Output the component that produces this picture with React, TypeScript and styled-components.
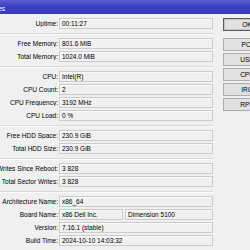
import React from "react";
import styled, { createGlobalStyle } from "styled-components";

const GlobalStyle = createGlobalStyle`
  html, body {
    margin: 0;
    padding: 0;
    background: #f0f0f0;
    overflow: hidden;
  }
  body {
    font-family: "Liberation Sans", Arial, sans-serif;
    color: #000;
  }
`;

const Window = styled.div`
  width: 310px;
  margin-left: -30px;
  background: #f0f0f0;
`;

const TitleBar = styled.div`
  height: 14px;
  display: flex;
  align-items: center;
  padding-left: 4px;
  padding-top: 2px;
  box-sizing: border-box;
  background: linear-gradient(#5a5ecf, #3b40c3 45%, #373cc0);
  color: #fff;
  font-size: 6.5px;
`;

const Body = styled.div`
  display: flex;
  align-items: flex-start;
  padding-top: 3px;
`;

const Form = styled.div`
  width: 243px;
  display: flex;
  flex-direction: column;
`;

const Row = styled.div`
  display: grid;
  grid-template-columns: 89px 1fr;
  height: 13px;
  align-items: center;
`;

const Label = styled.div`
  text-align: right;
  padding-right: 1px;
  font-size: 6.5px;
  white-space: nowrap;
  overflow: hidden;
  direction: rtl;
`;

const Fields = styled.div`
  display: flex;
  gap: 2px;
`;

const Field = styled.div<{ $width?: number }>`
  ${(p) => (p.$width ? `width: ${p.$width}px;` : "flex: 1;")}
  height: 11px;
  box-sizing: border-box;
  border: 1px solid #cbcbcb;
  box-shadow: inset 1px 1px 0 #fafafa;
  background: #f0f0f0;
  padding-left: 2px;
  font-size: 6.5px;
  line-height: 9px;
  white-space: nowrap;
  overflow: hidden;
`;

const Separator = styled.div`
  height: 7px;
  display: flex;
  align-items: center;
  &::before {
    content: "";
    flex: 1;
    height: 1px;
    background: #d9d9d9;
    border-bottom: 1px solid #fbfbfb;
  }
`;

const Side = styled.div`
  margin-left: 10px;
  padding-top: 1px;
  display: flex;
  flex-direction: column;
  gap: 2px;
`;

const Button = styled.div<{ $primary?: boolean; $spaced?: boolean }>`
  width: 48px;
  height: 13px;
  box-sizing: border-box;
  display: flex;
  align-items: center;
  justify-content: center;
  font-size: 6.5px;
  background: #e1e1e1;
  border: 1px solid ${(p) => (p.$primary ? "#5c5c5c" : "#adadad")};
  ${(p) => p.$primary && "box-shadow: inset 0 0 0 1px #c4c4c4;"}
  ${(p) => p.$spaced && "margin-bottom: 5px;"}
`;

type Item = { label: string; value: string; extra?: string };

const groups: Item[][] = [
  [{ label: "Uptime:", value: "00:11:27" }],
  [
    { label: "Free Memory:", value: "801.6 MiB" },
    { label: "Total Memory:", value: "1024.0 MiB" },
  ],
  [
    { label: "CPU:", value: "Intel(R)" },
    { label: "CPU Count:", value: "2" },
    { label: "CPU Frequency:", value: "3192 MHz" },
    { label: "CPU Load:", value: "0 %" },
  ],
  [
    { label: "Free HDD Space:", value: "230.9 GiB" },
    { label: "Total HDD Size:", value: "230.9 GiB" },
  ],
  [
    { label: "Writes Since Reboot:", value: "3 828" },
    { label: "Total Sector Writes:", value: "3 828" },
  ],
  [
    { label: "Architecture Name:", value: "x86_64" },
    { label: "Board Name:", value: "x86 Dell Inc.", extra: "Dimension 5100" },
    { label: "Version:", value: "7.16.1 (stable)" },
    { label: "Build Time:", value: "2024-10-10 14:03:32" },
  ],
];

const buttons = ["OK", "PCI", "USB", "CPU", "IRQ", "RPS"];

export default function App() {
  return (
    <>
      <GlobalStyle />
      <Window>
        <TitleBar>Resources</TitleBar>
        <Body>
          <Form>
            {groups.map((group, gi) => (
              <React.Fragment key={gi}>
                {gi > 0 && <Separator />}
                {group.map((item) => (
                  <Row key={item.label}>
                    <Label>
                      <bdi>{item.label}</bdi>
                    </Label>
                    {item.extra ? (
                      <Fields>
                        <Field $width={64}>{item.value}</Field>
                        <Field>{item.extra}</Field>
                      </Fields>
                    ) : (
                      <Field>{item.value}</Field>
                    )}
                  </Row>
                ))}
              </React.Fragment>
            ))}
          </Form>
          <Side>
            {buttons.map((b, i) => (
              <Button key={b} $primary={i === 0} $spaced={i === 0}>
                {b}
              </Button>
            ))}
          </Side>
        </Body>
      </Window>
    </>
  );
}
